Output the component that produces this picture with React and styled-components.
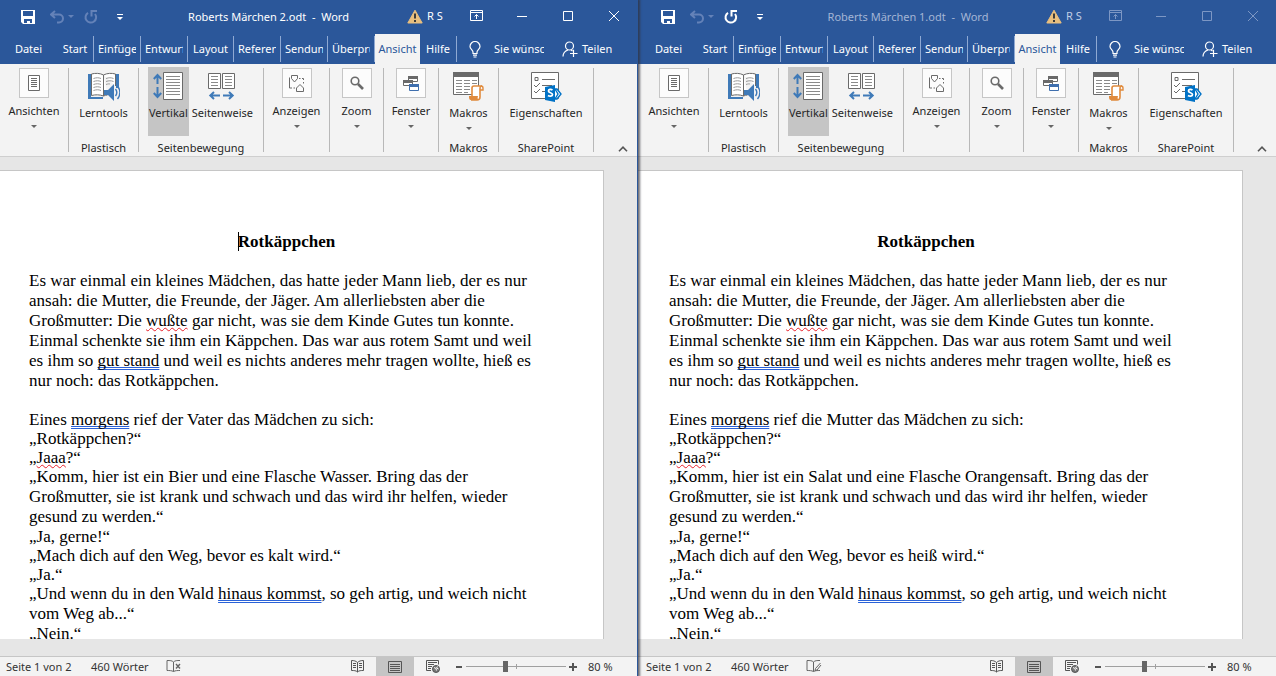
import React from 'react'
import styled, { createGlobalStyle } from 'styled-components'

const GlobalStyle = createGlobalStyle`
    *, *::before, *::after { box-sizing: border-box; }
    body {
        margin: 0;
        overflow: hidden;
        font-family: "Noto Sans", "Open Sans", sans-serif;
        font-size: 11px;
        line-height: 16px;
        color: #262626;
    }
    button {
        padding: 0;
        border: 0;
        background: none;
        color: inherit;
        font: inherit;
    }
    svg { display: block; flex: none; }
`

const Desktop = styled.div`
    display: grid;
    grid-template-columns: 1fr 1fr;
    height: 100vh;
`

const Window = styled.main`
    --edge: ${ props => props.$behind ? '2px' : '0px' };
    position: relative;
    z-index: ${ props => props.$behind ? 0 : 1 };
    display: flex;
    flex-direction: column;
    min-width: 0;
    min-height: 0;
    border-right: ${ props => props.$behind ? '0' : '1px solid #2b579a' };
    box-shadow: ${ props => props.$behind ? 'none' : '1px 0 2px 1px rgba(50, 50, 60, 0.7)' };
    background: #e6e6e6;
`

// title bar

const TitleBar = styled.header`
    display: flex;
    height: 34px;
    padding-left: var(--edge);
    background: #2b579a;
    color: #fff;
`

const QuickAccess = styled.div`
    display: flex;
    align-items: center;
    width: 140px;
    padding-left: 21px;
`

const QuickButton = styled.button`
    margin-right: ${ props => props.$gap }px;
    color: ${ props => props.$dim ? '#6482b8' : '#fff' };
`

const DocumentTitle = styled.h1`
    flex: 1;
    margin: 0;
    font-size: 11px;
    font-weight: normal;
    line-height: 34px;
    text-align: center;
    white-space: pre;
    color: ${ props => props.$dim ? '#a3b5d5' : '#fff' };
`

const Account = styled.button`
    display: flex;
    align-items: center;
    gap: 4px;
    width: 56px;
    height: 32px;
    padding-left: 10px;
    white-space: nowrap;
    color: ${ props => props.$dim ? '#c0cde4' : '#fff' };
`

const CaptionButton = styled.button`
    display: flex;
    align-items: center;
    justify-content: center;
    width: 46px;
    height: 31px;
    color: ${ props => props.$dim ? '#7d97c4' : '#fff' };
`

// tabs

const TabBar = styled.nav`
    display: flex;
    align-items: center;
    height: 30px;
    padding-left: var(--edge);
    background: #2b579a;
    color: #fff;
`

const Tab = styled.button`
    width: ${ props => props.$width }px;
    height: ${ props => props.$active ? 30 : 26 }px;
    padding: 0 ${ props => props.$active ? 3 : 4 }px;
    border-right: ${ props => props.$divided ? '1px solid #8fa9d3' : '0' };
    background: ${ props => props.$active ? '#f3f3f3' : 'none' };
    color: ${ props => props.$active ? '#2b579a' : '#fff' };
`

const Clip = styled.span`
    display: block;
    overflow: hidden;
    white-space: nowrap;
`

const TellMe = styled.button`
    display: flex;
    align-items: center;
    gap: 13px;
    width: 75px;
    margin-left: 12px;
`

const Share = styled.button`
    display: flex;
    align-items: center;
    gap: 4px;
    margin-left: 18px;
`

// ribbon

const Ribbon = styled.section`
    display: flex;
    height: 93px;
    padding-left: var(--edge);
    border-bottom: 1px solid #cfcfcf;
    background: #f3f3f3;
`

const Group = styled.div`
    display: flex;
    flex-direction: column;
    align-items: center;
    flex: none;
    width: ${ props => props.$width }px;
    padding-top: 3px;
`

const GroupButtons = styled.div`
    display: flex;
    gap: 2px;
    height: 73px;
`

const GroupName = styled.div`
    white-space: nowrap;
`

const Separator = styled.div`
    flex: none;
    width: 1px;
    margin: 4px 0;
    background: #b8b8b8;
`

const CommandButton = styled.button`
    display: flex;
    flex-direction: column;
    align-items: center;
    height: 69px;
    padding: ${ props => props.$boxed ? 1 : 5 }px 1px 0;
    background: ${ props => props.$selected ? '#c5c5c5' : 'none' };
    white-space: nowrap;
`

const CommandIcon = styled.span`
    display: flex;
    align-items: center;
    justify-content: center;
    height: 30px;
    min-width: 30px;
    margin-bottom: ${ props => props.$boxed ? 5 : 3 }px;
    border: ${ props => props.$boxed ? '1px solid #c6c6c6' : '0' };
    background: ${ props => props.$boxed ? '#fcfcfc' : 'none' };
`

const Caret = styled.span`
    margin-top: 6px;
    border: 3px solid transparent;
    border-top-color: #666;
    border-bottom: 0;
`

const Collapse = styled.button`
    align-self: flex-end;
    margin: 0 9px 4px auto;
`

// document

const Canvas = styled.div`
    display: flex;
    flex: 1;
    min-height: 0;
    padding: 13px 33px 17px 0;
`

const Page = styled.article`
    flex: 1;
    padding: 61px 59px 0 calc(29px + var(--edge));
    border-top: 1px solid #c6c6c6;
    border-right: 1px solid #c6c6c6;
    background: #fff;
    color: #000;
    font-family: "Liberation Serif", serif;
    font-size: 17px;
    line-height: 20px;
    overflow: hidden;
`

const Heading = styled.h2`
    margin: 0 0 19px;
    font-size: 17px;
    text-align: center;
`

const TextCursor = styled.span`
    border-left: 1px solid #000;
    margin-right: -1px;
`

const Paragraph = styled.p`
    margin: 0 0 ${ props => props.$spaced ? 19 : 0 }px;
`

const Line = styled(Paragraph)`
    line-height: 19px;
`

const Misspelled = styled.span`
    text-decoration: underline wavy #e8202a 1px;
    text-decoration-skip-ink: none;
    text-underline-offset: 1px;
`

const Grammar = styled.span`
    text-decoration-line: underline;
    text-decoration-style: double;
    text-decoration-color: #2a62d8;
    text-decoration-thickness: 1px;
    text-decoration-skip-ink: none;
    text-underline-offset: 1px;
`

// status bar

const StatusBar = styled.footer`
    display: flex;
    align-items: center;
    height: 20px;
    padding-left: calc(6px + var(--edge));
    border-top: 1px solid #c6c6c6;
    background: #f3f3f3;
    color: #333;
    white-space: nowrap;
`

const StatusItem = styled.span`
    width: ${ props => props.$width }px;
`

const Views = styled.div`
    display: flex;
    align-self: stretch;
    margin-left: auto;
`

const ViewButton = styled.button`
    display: flex;
    align-items: center;
    justify-content: center;
    width: 38px;
    background: ${ props => props.$selected ? '#c5c5c5' : 'none' };
`

const ZoomStep = styled.button`
    display: flex;
    justify-content: center;
    width: 14px;
`

const ZoomSlider = styled.input`
    appearance: none;
    width: 100px;
    height: 11px;
    margin: 0;
    background:
        linear-gradient(#a0a0a0, #a0a0a0) center / 100% 1px no-repeat,
        linear-gradient(#a0a0a0, #a0a0a0) center / 1px 5px no-repeat;
    &::-webkit-slider-thumb {
        appearance: none;
        width: 5px;
        height: 11px;
        background: #666;
    }
`

const ZoomLevel = styled.button`
    width: 57px;
    padding-left: 8px;
    text-align: left;
`

// icons

const SaveIcon = () => (
    <svg width="14" height="14" viewBox="0 0 14 14">
        <path d="M0 0h14v14H2L0 12z" fill="currentColor" />
        <path d="M2 1h10v5H2zM3 9h8v4H9v-2H6v2H3z" fill="#2b579a" />
    </svg>
)

const UndoIcon = () => (
    <svg width="25" height="14" viewBox="0 0 25 14" fill="none" stroke="currentColor">
        <path d="M5 1L1 4.500l4 3.500M1.500 4.500H9a4 4 0 0 1 0 8H7" strokeWidth="2" />
        <path d="M18 5h6l-3 3z" fill="currentColor" stroke="none" />
    </svg>
)

const RedoIcon = () => (
    <svg width="14" height="14" viewBox="0 0 14 14" fill="none" stroke="currentColor" strokeWidth="2">
        <path d="M4 2.800A5.300 5.300 0 1 0 11 4" />
        <path d="M7.500 6.500V1H13" />
    </svg>
)

const CustomizeIcon = () => (
    <svg width="8" height="7" viewBox="0 0 8 7" fill="currentColor">
        <path d="M1 0h6v1H1zM1 3h6L4 6z" />
    </svg>
)

const WarningIcon = () => (
    <svg width="16" height="15" viewBox="0 0 16 15">
        <path d="M8 1.200L15.200 14H.8z" fill="#e9bf7e" stroke="#e9bf7e" strokeLinejoin="round" />
        <path d="M7 4.500h2v5H7zM7 11h2v2H7z" fill="#3a3a3a" />
    </svg>
)

const captionIcons = {
    'Menüband-Anzeigeoptionen': (
        <svg width="13" height="11" viewBox="0 0 13 11" fill="none" stroke="currentColor">
            <path d="M.5.5h12v10H.5zM.5 2.500h12M6.500 9V4.500M4.500 6.500l2-2 2 2" />
        </svg>
    ),
    Minimieren: (
        <svg width="10" height="10" viewBox="0 0 10 10"><path d="M0 5h10v1H0z" fill="currentColor" /></svg>
    ),
    Maximieren: (
        <svg width="10" height="10" viewBox="0 0 10 10" fill="none" stroke="currentColor"><path d="M.5.5h9v9h-9z" /></svg>
    ),
    'Schließen': (
        <svg width="10" height="10" viewBox="0 0 10 10" stroke="currentColor"><path d="M0 0l10 10M10 0L0 10" /></svg>
    ),
}

const BulbIcon = () => (
    <svg width="12" height="17" viewBox="0 0 12 17" fill="none" stroke="currentColor" strokeWidth="1.2">
        <path d="M4 12.500V11C4 9 1 8 1 5.500a5 5 0 0 1 10 0C11 8 8 9 8 11v1.500zM4 14.200h4M4.500 16h3" />
    </svg>
)

const ShareIcon = () => (
    <svg width="16" height="16" viewBox="0 0 16 16" fill="none" stroke="currentColor" strokeWidth="1.2">
        <circle cx="7.500" cy="5" r="4" />
        <path d="M1 15.500c0-3.500 2-5.500 5-6.500M9 9l1.500 1M8 12.500h7.500M11.500 8.800V16" />
    </svg>
)

const ViewsIcon = () => (
    <svg width="12" height="16" viewBox="0 0 12 16" fill="none" stroke="#6a6a6a">
        <path d="M.5.5h11v15H.5z" fill="#fff" />
        <path d="M3 3.500h6M3 5.500h6M3 7.500h6M3 9.500h6M3 11.500h6" />
    </svg>
)

const ReaderIcon = () => (
    <svg width="33" height="30" viewBox="0 0 33 30" fill="none">
        <path d="M1 2h3v23h12v2H1zM29 2h3v14h-3z" fill="#3f7ab8" />
        <path d="M16.500 3C13 1 8 1 4.500 2v21.500c4-1 8-1 12 .5 1-.5 3-1 4-1M16.500 3C20 1 25 1 28.500 2v12M16.500 3v21" fill="#fff" stroke="#6a6a6a" />
        <path d="M6.500 6.500c3-1 5-1 7.500 0M6.500 9.500c3-1 5-1 7.500 0M6.500 12.500c3-1 5-1 7.500 0M6.500 15.500c3-1 5-1 7.500 0M6.500 18.500c3-1 5-1 7.500 0M19 6.500c3-1 5-1 7.500 0M19 9.500c3-1 5-1 7.500 0M19 12.500c2-.7 3-.7 4-.5" stroke="#9a9a9a" />
        <path d="M17 18h4l6-6v17l-6-6h-4z" fill="#3f7ab8" />
        <path d="M28.500 17c1.500 2 1.500 5 0 7M30.500 14c3 4 3 9 0 13" stroke="#3f7ab8" strokeWidth="1.400" />
    </svg>
)

const VerticalIcon = () => (
    <svg width="30" height="30" viewBox="0 0 30 30" fill="none">
        <path d="M10.500.5h19v27h-19z" fill="#fff" stroke="#6a6a6a" />
        <path d="M13 4.500h14M13 7.500h14M13 10.500h14M13 13.500h14M13 16.500h14M13 19.500h14M13 22.500h14" stroke="#8a8a8a" />
        <path d="M4.500 12V4M.8 7l3.700-4 3.700 4M4.500 15v9M.8 21l3.700 4 3.700-4" stroke="#3f7ab8" strokeWidth="2" />
    </svg>
)

const SideBySideIcon = () => (
    <svg width="28" height="30" viewBox="0 0 28 30" fill="none">
        <path d="M.5 1.500h12v15H.5zM14.500 1.500h12v15h-12z" fill="#fff" stroke="#6a6a6a" />
        <path d="M3 4.500h7M3 7.500h7M3 10.500h7M3 13.500h7M17 4.500h7M17 7.500h7M17 10.500h7M17 13.500h7" stroke="#8a8a8a" />
        <path d="M12 23.500H3M6 20l-3.700 3.500L6 27M15 23.500h9M21 20l3.700 3.500L21 27" stroke="#3f7ab8" strokeWidth="2" />
    </svg>
)

const ShowIcon = () => (
    <svg width="17" height="17" viewBox="0 0 17 17" fill="none" stroke="#6a6a6a">
        <path d="M3.500.5h6v3L6.500 7l-3-3.500zM1.500 2.500v10.500H4M5.500 13H7M11 3.500h1.500M14 3.500h1.500V5M15.500 7v1.500M8.500 16.500v-3.500L12 9.500l3.500 3.500v3.500z" />
    </svg>
)

const ZoomIcon = () => (
    <svg width="14" height="14" viewBox="0 0 14 14" fill="none" stroke="#6a6a6a">
        <circle cx="5" cy="5" r="3.800" strokeWidth="1.600" />
        <path d="M8 8l5 5" strokeWidth="2.600" />
    </svg>
)

const WindowsIcon = () => (
    <svg width="16" height="15" viewBox="0 0 16 15" fill="#fff" stroke="#6a6a6a">
        <path d="M5.500.5h9v5h-9z" /><path d="M5 0h10v3H5z" fill="#6a6a6a" stroke="none" />
        <path d="M.5 4.500h9v5h-9z" /><path d="M0 4h10v3H0z" fill="#6a6a6a" stroke="none" />
        <path d="M6.500 8.500h9v6h-9z" stroke="#3f6fae" /><path d="M6 8h10v3H6z" fill="#3f6fae" stroke="none" />
    </svg>
)

const MacroIcon = () => (
    <svg width="31" height="30" viewBox="0 0 31 30" fill="none">
        <path d="M.5.5h25v22H.5z" fill="#fff" stroke="#6a6a6a" />
        <path d="M0 0h26v5H0z" fill="#6a6a6a" />
        <path d="M3 8.500h6M11 8.500h6M19 8.500h5M3 11.500h6M11 11.500h6M19 11.500h5M3 14.500h6M11 14.500h6M3 17.500h6M11 17.500h6M3 20.500h6M11 20.500h4" stroke="#8a8a8a" />
        <path d="M19 24V16a2 2 0 0 1 2-2h8c-2 0-2 1-2 3v8c0 2-1 3-3 3h-6c2 0 1-2 1-4z" fill="#fff" stroke="#e08a3c" strokeWidth="1.600" />
        <path d="M16 24h9c-1 2 0 4 1 4h-8c-2 0-2-2-2-4z" fill="#e08a3c" />
        <path d="M27 18h3v-2c0-2-1-2-2-2" stroke="#e08a3c" strokeWidth="1.400" />
    </svg>
)

const SharePointIcon = () => (
    <svg width="31" height="30" viewBox="0 0 31 30" fill="none">
        <path d="M.5.5h27v26H.5z" fill="#fff" stroke="#6a6a6a" />
        <path d="M4 5.500h3v3H4zM11 7.500h13M3 13l2 2 4-4M11 13.500h10M3 19l2 2 4-4M11 19.500h3" stroke="#6a6a6a" />
        <path d="M23 14l8 8-8 7z" fill="#fff" />
        <path d="M24 17l2 0 4 5-4 5h-2l3-5z" stroke="#0072c6" strokeWidth="1.400" />
        <path d="M14 15l10-2v17l-10-2z" fill="#0072c6" />
        <path d="M21.500 18c-1.500-1-4-.8-4 1 0 2 4 1.500 4 3.500s-3 2-4.500 1" stroke="#fff" strokeWidth="1.800" />
    </svg>
)

const ChevronUp = () => (
    <svg width="10" height="6" viewBox="0 0 10 6" fill="none" stroke="#555" strokeWidth="1.600">
        <path d="M1 5.200l4-4 4 4" />
    </svg>
)

const ProofIcon = ({ editing }) => (
    <svg width="16" height="13" viewBox="0 0 16 13" fill="none" stroke="#666">
        <path d="M7.500 11.500c-2-1-4-1-6.500-1v-10c3 0 5 0 6.500 1.500zM7.500 2C9 .5 11 .5 14 .5M7.500 11.500c2-1 4-1 6.500-1" />
        { editing
            ? <path d="M14.500 3l-5 5.500-.5 2 2-.5 4-5" />
            : <path d="M10 4l4 4.500M14 4l-4 4.500" strokeWidth="1.400" /> }
    </svg>
)

const ReadViewIcon = () => (
    <svg width="13" height="13" viewBox="0 0 13 13" fill="none" stroke="#555">
        <path d="M6.500 2.500C5 1 3 .5.5.5v10c2.500 0 4.500 0 6 1.500 1.500-1.500 3.500-1.500 6-1.500V.5c-2.500 0-4.500.5-6 2zM6.500 2.500V12M2 3.500h3M2 5.500h3M2 7.500h3M8 3.500h3M8 5.500h3M8 7.500h3" />
    </svg>
)

const PrintViewIcon = () => (
    <svg width="14" height="12" viewBox="0 0 14 12" fill="none" stroke="#555">
        <path d="M.5.5h13v11H.5zM2 3.500h10M2 5.500h10M2 7.500h10M2 9.500h10" />
    </svg>
)

const WebViewIcon = () => (
    <svg width="14" height="13" viewBox="0 0 14 13" fill="none" stroke="#555">
        <path d="M5 10.500H.5V.5h12v4M2 2.500h9M2 4.500h6M2 6.500h4M2 8.500h3" />
        <circle cx="10" cy="9" r="3.500" fill="#777" />
        <path d="M8 7.500l2 1 .5 2M11.500 6.500l-1 1.500 2 1" stroke="#f3f3f3" />
    </svg>
)

const tabs = [
    { label: 'Datei', width: 57 },
    { label: 'Start', width: 37, divided: true },
    { label: 'Einfügen', width: 47, divided: true },
    { label: 'Entwurf', width: 47, divided: true },
    { label: 'Layout', width: 46, divided: true },
    { label: 'Referenzen', width: 47, divided: true },
    { label: 'Sendungen', width: 47, divided: true },
    { label: 'Überprüfen', width: 47, divided: true },
    { label: 'Ansicht', width: 45, active: true },
    { label: 'Hilfe', width: 37, divided: true },
]

const groups = [
    { width: 68, commands: [{ label: 'Ansichten', icon: <ViewsIcon />, boxed: true, menu: true }] },
    { width: 69, name: 'Plastisch', commands: [{ label: 'Lerntools', icon: <ReaderIcon /> }] },
    {
        width: 124,
        name: 'Seitenbewegung',
        commands: [
            { label: 'Vertikal', icon: <VerticalIcon />, selected: true },
            { label: 'Seitenweise', icon: <SideBySideIcon /> },
        ],
    },
    { width: 65, commands: [{ label: 'Anzeigen', icon: <ShowIcon />, boxed: true, menu: true }] },
    { width: 53, commands: [{ label: 'Zoom', icon: <ZoomIcon />, boxed: true, menu: true }] },
    { width: 54, commands: [{ label: 'Fenster', icon: <WindowsIcon />, boxed: true, menu: true }] },
    { width: 59, name: 'Makros', commands: [{ label: 'Makros', icon: <MacroIcon />, menu: true }] },
    { width: 94, name: 'SharePoint', commands: [{ label: 'Eigenschaften', icon: <SharePointIcon /> }] },
]

const WordWindow = ({ title, behind, parent, meal, weather }) => (
    <Window $behind={ behind }>
        <TitleBar>
            <QuickAccess>
                <QuickButton $gap={ 15 } aria-label="Speichern"><SaveIcon /></QuickButton>
                <QuickButton $gap={ 9 } $dim aria-label="Rückgängig"><UndoIcon /></QuickButton>
                <QuickButton $gap={ 18 } $dim={ !behind } aria-label="Wiederholen"><RedoIcon /></QuickButton>
                <QuickButton $gap={ 0 } aria-label="Symbolleiste anpassen"><CustomizeIcon /></QuickButton>
            </QuickAccess>
            <DocumentTitle $dim={ behind }>{ `${ title }  -  Word` }</DocumentTitle>
            <Account $dim={ behind }><WarningIcon />R S</Account>
            {
                Object.entries(captionIcons).map(([label, icon]) => (
                    <CaptionButton key={ label } $dim={ behind } aria-label={ label }>{ icon }</CaptionButton>
                ))
            }
        </TitleBar>

        <TabBar>
            {
                tabs.map(tab => (
                    <Tab key={ tab.label } $width={ tab.width } $divided={ tab.divided } $active={ tab.active }>
                        <Clip>{ tab.label }</Clip>
                    </Tab>
                ))
            }
            <TellMe><BulbIcon /><Clip>Sie wünschen</Clip></TellMe>
            <Share><ShareIcon />Teilen</Share>
        </TabBar>

        <Ribbon>
            {
                groups.map(group => (
                    <React.Fragment key={ group.commands[0].label }>
                        <Group $width={ group.width }>
                            <GroupButtons>
                                {
                                    group.commands.map(command => (
                                        <CommandButton key={ command.label } $boxed={ command.boxed } $selected={ command.selected }>
                                            <CommandIcon $boxed={ command.boxed }>{ command.icon }</CommandIcon>
                                            { command.label }
                                            { command.menu && <Caret /> }
                                        </CommandButton>
                                    ))
                                }
                            </GroupButtons>
                            { group.name && <GroupName>{ group.name }</GroupName> }
                        </Group>
                        <Separator />
                    </React.Fragment>
                ))
            }
            <Collapse aria-label="Menüband reduzieren"><ChevronUp /></Collapse>
        </Ribbon>

        <Canvas>
            <Page>
                <Heading>{ !behind && <TextCursor /> }Rotkäppchen</Heading>
                <Paragraph $spaced>
                    Es war einmal ein kleines Mädchen, das hatte jeder Mann lieb, der es nur ansah: die Mutter,
                    die Freunde, der Jäger. Am allerliebsten aber die Großmutter: Die <Misspelled>wußte</Misspelled> gar
                    nicht, was sie dem Kinde Gutes tun konnte. Einmal schenkte sie ihm ein Käppchen. Das war aus
                    rotem Samt und weil es ihm so <Grammar>gut stand</Grammar> und weil es nichts anderes mehr
                    tragen wollte, hieß es nur noch: das Rotkäppchen.
                </Paragraph>
                <Line>Eines <Grammar>morgens</Grammar> rief { parent } das Mädchen zu sich:</Line>
                <Line>„Rotkäppchen?“</Line>
                <Line>„<Misspelled>Jaaa</Misspelled>?“</Line>
                <Paragraph>
                    „Komm, hier ist ein { meal }. Bring das der Großmutter, sie ist krank und schwach und das
                    wird ihr helfen, wieder gesund zu werden.“
                </Paragraph>
                <Line>„Ja, gerne!“</Line>
                <Line>„Mach dich auf den Weg, bevor es { weather } wird.“</Line>
                <Line>„Ja.“</Line>
                <Paragraph>
                    „Und wenn du in den Wald <Grammar>hinaus kommst</Grammar>, so geh artig, und weich nicht vom Weg ab...“
                </Paragraph>
                <Line>„Nein.“</Line>
            </Page>
        </Canvas>

        <StatusBar>
            <StatusItem $width={ 85 }>Seite 1 von 2</StatusItem>
            <StatusItem $width={ 75 }>460 Wörter</StatusItem>
            <ProofIcon editing={ behind } />
            <Views>
                <ViewButton aria-label="Lesemodus"><ReadViewIcon /></ViewButton>
                <ViewButton $selected aria-label="Seitenlayout"><PrintViewIcon /></ViewButton>
                <ViewButton aria-label="Weblayout"><WebViewIcon /></ViewButton>
            </Views>
            <ZoomStep aria-label="Verkleinern">
                <svg width="8" height="8" viewBox="0 0 8 8"><path d="M1 3h6v2H1z" fill="#555" /></svg>
            </ZoomStep>
            <ZoomSlider type="range" min="0" max="100" defaultValue="39" aria-label="Zoom" />
            <ZoomStep aria-label="Vergrößern">
                <svg width="8" height="8" viewBox="0 0 8 8"><path d="M0 3h3V0h2v3h3v2H5v3H3V5H0z" fill="#555" /></svg>
            </ZoomStep>
            <ZoomLevel>80 %</ZoomLevel>
        </StatusBar>
    </Window>
)

const App = () => (
    <>
        <GlobalStyle />
        <Desktop>
            <WordWindow
                title="Roberts Märchen 2.odt"
                parent="der Vater"
                meal="Bier und eine Flasche Wasser"
                weather="kalt"
            />
            <WordWindow
                behind
                title="Roberts Märchen 1.odt"
                parent="die Mutter"
                meal="Salat und eine Flasche Orangensaft"
                weather="heiß"
            />
        </Desktop>
    </>
)

export default App
